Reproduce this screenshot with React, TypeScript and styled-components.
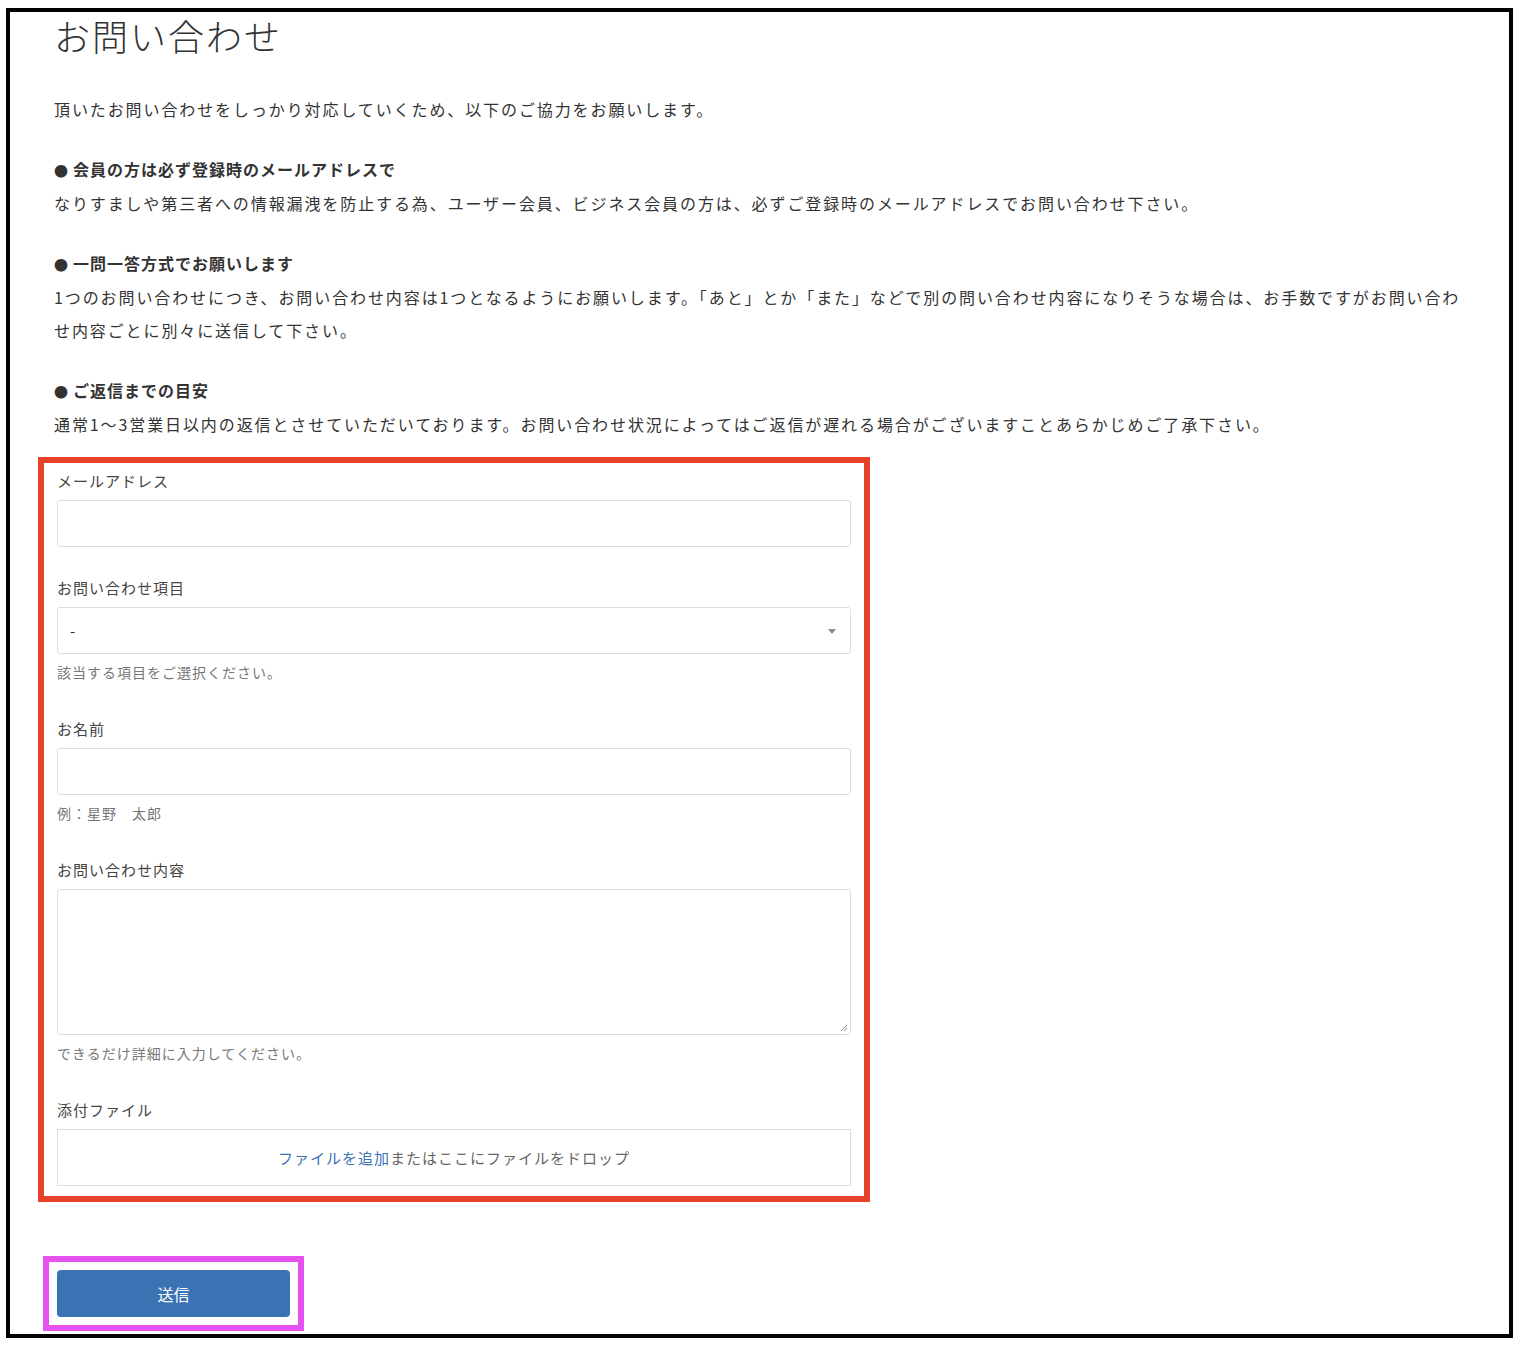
import React from "react";
import styled, { createGlobalStyle } from "styled-components";

const Global = createGlobalStyle`
  html, body { margin: 0; padding: 0; background: #fff; }
  body { font-family: "Noto Sans CJK JP", "Noto Sans", sans-serif; color: #333; }
  * { box-sizing: border-box; }
`;

const Frame = styled.div`
  margin: 8px 7px 8px 6px;
  height: 1330px;
  border: 4px solid #000;
  padding: 3px 0 0 44px;
  overflow: hidden;
`;

const Title = styled.h1`
  margin: 0 0 38px;
  font-size: 36px;
  font-weight: 300;
  line-height: 40px;
  letter-spacing: 2px;
`;

const P = styled.p`
  margin: 0 0 27px;
  font-size: 16px;
  line-height: 33px;
  letter-spacing: 1.9px;
  max-width: 1420px;
`;

const Heading = styled.div`
  font-weight: 700;
  font-size: 16px;
  line-height: 33px;
  letter-spacing: 1px;
`;

const Bullet = styled.span`
  font-size: 14px;
  margin-right: 4px;
`;

const RedBox = styled.div`
  margin: -11px 0 0 -16px;
  width: 832px;
  border: 6px solid #e8412a;
  padding: 6px 13px 10px 13px;
  display: flex;
  flex-direction: column;
`;

const Field = styled.div<{ $gap?: number }>`
  margin-bottom: ${(p) => p.$gap ?? 29}px;
`;

const Label = styled.div`
  font-size: 15px;
  line-height: 24px;
  margin-bottom: 7px;
  letter-spacing: 1px;
  color: #444;
`;

const Input = styled.div<{ $h?: number }>`
  height: ${(p) => p.$h ?? 47}px;
  border: 1px solid #ddd;
  border-radius: 3px;
  position: relative;
  display: flex;
  align-items: center;
  padding-left: 12px;
  font-size: 15px;
`;

const Arrow = styled.span`
  position: absolute;
  right: 14px;
  top: 21px;
  border-left: 4px solid transparent;
  border-right: 4px solid transparent;
  border-top: 5px solid #888;
`;

const Grip = styled.svg`
  position: absolute;
  right: 2px;
  bottom: 2px;
`;

const Help = styled.div`
  font-size: 14px;
  color: #777;
  line-height: 20px;
  margin-top: 8px;
  letter-spacing: 1px;
`;

const Drop = styled.div`
  height: 57px;
  border: 1px solid #ddd;
  display: flex;
  align-items: center;
  justify-content: center;
  font-size: 15px;
  letter-spacing: 1px;
  color: #666;
`;

const Link = styled.span`
  color: #3b72b4;
`;

const Magenta = styled.div`
  margin: 54px 0 0 -11px;
  width: 261px;
  border: 6px solid #e652f0;
  padding: 8px;
`;

const Button = styled.button`
  width: 233px;
  height: 47px;
  background: #3b72b4;
  color: #fff;
  border: none;
  border-radius: 4px;
  font-family: inherit;
  font-size: 16px;
  display: block;
`;

export default function App() {
  return (
    <>
      <Global />
      <Frame>
        <Title>お問い合わせ</Title>
        <P>頂いたお問い合わせをしっかり対応していくため、以下のご協力をお願いします。</P>
        <P>
          <Heading><Bullet>●</Bullet>会員の方は必ず登録時のメールアドレスで</Heading>
          なりすましや第三者への情報漏洩を防止する為、ユーザー会員、ビジネス会員の方は、必ずご登録時のメールアドレスでお問い合わせ下さい。
        </P>
        <P>
          <Heading><Bullet>●</Bullet>一問一答方式でお願いします</Heading>
          1つのお問い合わせにつき、お問い合わせ内容は1つとなるようにお願いします。「あと」とか「また」などで別の問い合わせ内容になりそうな場合は、お手数ですがお問い合わせ内容ごとに別々に送信して下さい。
        </P>
        <P>
          <Heading><Bullet>●</Bullet>ご返信までの目安</Heading>
          通常1〜3営業日以内の返信とさせていただいております。お問い合わせ状況によってはご返信が遅れる場合がございますことあらかじめご了承下さい。
        </P>
        <RedBox>
          <Field $gap={29}>
            <Label>メールアドレス</Label>
            <Input />
          </Field>
          <Field $gap={35}>
            <Label>お問い合わせ項目</Label>
            <Input>
              -
              <Arrow />
            </Input>
            <Help>該当する項目をご選択ください。</Help>
          </Field>
          <Field $gap={35}>
            <Label>お名前</Label>
            <Input />
            <Help>例：星野　太郎</Help>
          </Field>
          <Field $gap={35}>
            <Label>お問い合わせ内容</Label>
            <Input $h={146}>
              <Grip width="9" height="9" viewBox="0 0 9 9">
                <path d="M8 2L2 8M8 5L5 8" stroke="#888" strokeWidth="1" />
              </Grip>
            </Input>
            <Help>できるだけ詳細に入力してください。</Help>
          </Field>
          <Field $gap={0}>
            <Label>添付ファイル</Label>
            <Drop>
              <Link>ファイルを追加</Link>またはここにファイルをドロップ
            </Drop>
          </Field>
        </RedBox>
        <Magenta>
          <Button>送信</Button>
        </Magenta>
      </Frame>
    </>
  );
}
